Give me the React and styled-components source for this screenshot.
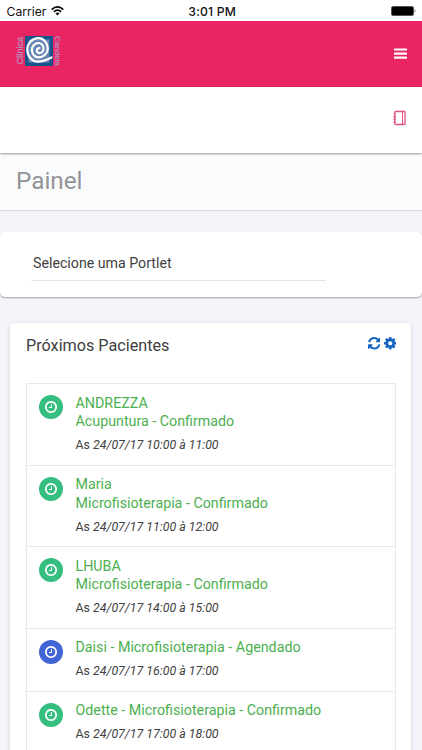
import styled, { createGlobalStyle } from "styled-components";

const GlobalStyle = createGlobalStyle`
    * {
        box-sizing: border-box;
    }

    body {
        margin: 0;
        background: #f4f5fa;
        color: #404040;
        font-family: Roboto, "Liberation Sans", sans-serif;
    }
`;

const patients = [
    { id: 1, lines: ["ANDREZZA", "Acupuntura - Confirmado"], time: "24/07/17 10:00 à 11:00" },
    { id: 2, lines: ["Maria", "Microfisioterapia - Confirmado"], time: "24/07/17 11:00 à 12:00" },
    { id: 3, lines: ["LHUBA", "Microfisioterapia - Confirmado"], time: "24/07/17 14:00 à 15:00" },
    { id: 4, lines: ["Daisi - Microfisioterapia - Agendado"], time: "24/07/17 16:00 à 17:00", color: "#4265d6" },
    { id: 5, lines: ["Odette - Microfisioterapia - Confirmado"], time: "24/07/17 17:00 à 18:00" },
];

const iconPaths = {
    clock: "M1024 544v448q0 14-9 23t-23 9h-320q-14 0-23-9t-9-23v-64q0-14 9-23t23-9h224v-352q0-14 9-23t23-9h64q14 0 23 9t9 23zm416 352q0-148-73-273t-198-198-273-73-273 73-198 198-73 273 73 273 198 198 273 73 273-73 198-198 73-273zm224 0q0 209-103 385.5t-279.5 279.5-385.5 103-385.5-103-279.5-279.5-103-385.5 103-385.5 279.5-279.5 385.5-103 385.5 103 279.5 279.5 103 385.5z",
    refresh: "M1639 1056q0 5-1 7-64 268-268 434.5t-478 166.5q-146 0-282.5-55t-243.5-157l-129 129q-19 19-45 19t-45-19-19-45v-448q0-26 19-45t45-19h448q26 0 45 19t19 45-19 45l-137 137q71 66 161 102t187 36q134 0 250-65t186-179q11-17 53-117 8-23 30-23h192q13 0 22.5 9.5t9.5 22.5zm25-800v448q0 26-19 45t-45 19h-448q-26 0-45-19t-19-45 19-45l138-138q-148-137-349-137-134 0-250 65t-186 179q-11 17-53 117-8 23-30 23h-199q-13 0-22.5-9.5t-9.5-22.5v-7q65-268 270-434.5t480-166.5q146 0 284 55.5t245 156.5l130-129q19-19 45-19t45 19 19 45z",
    cog: "M1152 896q0-106-75-181t-181-75-181 75-75 181 75 181 181 75 181-75 75-181zm512-109v222q0 12-8 23t-20 13l-185 28q-19 54-39 91 35 50 107 138 10 12 10 25t-9 23q-27 37-99 108t-94 71q-12 0-26-9l-138-108q-44 23-91 38-16 136-29 186-7 28-36 28h-222q-14 0-24.5-8.5t-11.5-21.5l-28-184q-49-16-90-37l-141 107q-10 9-25 9-14 0-25-11-126-114-165-168-7-10-7-23 0-12 8-23 15-21 51-66.5t54-70.5q-27-50-41-99l-183-27q-13-2-21-12.5t-8-23.5v-222q0-12 8-23t19-13l186-28q14-46 39-92-40-57-107-138-10-12-10-24 0-10 9-23 26-36 98.5-107.5t94.5-71.5q13 0 26 10l138 107q44-23 91-38 16-136 29-186 7-28 36-28h222q14 0 24.5 8.5t11.5 21.5l28 184q49 16 90 37l142-107q9-9 24-9 13 0 25 10 129 119 165 170 7 8 7 22 0 12-8 23-15 21-51 66.5t-54 70.5q26 50 41 98l183 28q13 2 21 12.5t8 23.5z",
};

const Icon = ({ name, size }) => (
    <svg width={size} height={size} viewBox="128 128 1536 1536" fill="currentColor">
        <path d={iconPaths[name]} />
    </svg>
);

const WifiIcon = () => (
    <svg width="13" height="10" viewBox="0 0 13 10" fill="none" stroke="#000" strokeWidth="1.6">
        <path d="M0.7 3.6Q6.5-1.8 12.3 3.6" />
        <path d="M2.8 5.8Q6.5 2.4 10.2 5.8" />
        <path d="M4.4 7.3Q6.5 5.5 8.6 7.3L6.5 9.5z" fill="#000" stroke="none" />
    </svg>
);

const BatteryIcon = () => (
    <svg width="26" height="10" viewBox="0 0 26 10">
        <rect x="0.5" y="0.5" width="22" height="9" rx="1.5" stroke="#555" fill="#000" />
        <path d="M23.7 3.3q1.4 1.7 0 3.4z" />
    </svg>
);

const BarsIcon = () => (
    <svg width="13" height="12" viewBox="0 0 13 12" fill="#fff">
        <rect y="0.4" width="13" height="2.2" rx="0.5" />
        <rect y="4.5" width="13" height="2.2" rx="0.5" />
        <rect y="8.6" width="13" height="2.2" rx="0.5" />
    </svg>
);

const NotebookIcon = () => (
    <svg width="13" height="16" viewBox="0 0 13 16" fill="none" stroke="#e0527f">
        <rect x="1.8" y="1.5" width="10.2" height="13" rx="0.7" strokeWidth="1.3" />
        <path d="M9.5 1.5v13" />
        <path d="M0.5 4h2.2M0.5 6.7h2.2M0.5 9.4h2.2M0.5 12.1h2.2" strokeWidth="1.2" />
    </svg>
);

const SpiralIcon = () => (
    <svg width="28" height="30" viewBox="0 0 28 30">
        <rect width="28" height="30" fill="#16558b" />
        <rect x="3.5" y="3.5" width="21" height="23" fill="#6786b5" />
        <path
            d="M14.5 12A2.8 2.5 0 0 0 11.8 14.5A2.6 2.5 0 0 0 14.3 17.2A4.2 4.7 0 0 0 18.5 12.5A5 5.5 0 0 0 13.5 7A6.6 7 0 0 0 6.9 14A6.6 7.3 0 0 0 13.5 21.3A9.3 8.5 0 0 0 22.8 12.8A9.3 10.6 0 0 0 13.5 2.2A11.2 11.3 0 0 0 2.3 13.5A10.2 12.1 0 0 0 12.5 25.6Q19 25.6 26.5 21.5"
            fill="none"
            stroke="#fff"
            strokeWidth="2.2"
            strokeLinecap="round"
        />
    </svg>
);

const Screen = styled.div`
    height: 750px;
    overflow: hidden;
`;

const StatusBar = styled.div`
    display: grid;
    grid-template-columns: 1fr auto 1fr;
    align-items: center;
    height: 21px;
    padding: 1px 5px 0 6.5px;
    background: #fff;
    color: #111;
    font: 12.2px Inter, sans-serif;
`;

const Carrier = styled.div`
    display: flex;
    align-items: center;
    gap: 5px;
`;

const Clock = styled.div`
    padding-left: 1px;
    font-weight: 500;
    letter-spacing: 0.2px;
`;

const Battery = styled.div`
    display: flex;
    justify-content: flex-end;
`;

const Header = styled.header`
    display: flex;
    align-items: center;
    justify-content: space-between;
    height: 66px;
    padding: 0 15px 0 16px;
    background: #e92663;
`;

const Logo = styled.div`
    display: flex;
    align-items: center;
    height: 30px;
    margin-top: -6px;
`;

const LogoWord = styled.span`
    width: 9px;
    writing-mode: vertical-rl;
    transform: ${({ $flip }) => ($flip ? "rotate(180deg)" : "none")};
    color: #b58dbd;
    font: ${({ $size }) => $size}px/9px "Liberation Sans", sans-serif;
    -webkit-text-stroke: 0.25px #b58dbd;
    text-align: center;
    white-space: nowrap;
`;

const SubHeader = styled.div`
    position: relative;
    display: flex;
    align-items: center;
    justify-content: flex-end;
    height: 66px;
    padding: 0 16px 4px;
    background: #fff;
    box-shadow: 0 1px 2px rgba(0, 0, 0, 0.4);
`;

const PageTitle = styled.h1`
    height: 58px;
    margin: 0;
    padding: 0 16px;
    border-bottom: 1px solid #d8dae0;
    background: #fafbfd;
    color: #939395;
    font-size: 24.3px;
    font-weight: 400;
    line-height: 56px;
`;

const SelectCard = styled.section`
    height: 65px;
    margin-top: 20.5px;
    padding: 18px 96px 0 31px;
    border-radius: 5px;
    background: #fff;
    box-shadow: 0 1px 2px rgba(0, 0, 0, 0.35);
`;

const SelectField = styled.div`
    height: 31px;
    padding-left: 2px;
    border-bottom: 1px solid #e2e6e6;
    font-size: 14.2px;
    line-height: 27px;
`;

const Portlet = styled.section`
    height: 470px;
    margin: 26.5px 11px 0 10px;
    padding: 0 15px 0 16px;
    border-radius: 4px;
    background: #fff;
    box-shadow: 0 1px 4px rgba(0, 0, 0, 0.15);
`;

const PortletHeader = styled.div`
    display: flex;
    justify-content: space-between;
    height: 60px;
    padding-top: 12px;

    & h2 {
        margin: 0;
        font-size: 16.2px;
        font-weight: 400;
        line-height: 21px;
    }
`;

const Tools = styled.div`
    display: flex;
    gap: 3.5px;
    padding-top: 2px;
    color: #1565c0;
`;

const List = styled.div`
    border: 1px solid #e6e8ea;
    border-bottom: 0;
`;

const Row = styled.div`
    display: flex;
    gap: 12.5px;
    height: ${({ $tall }) => ($tall ? 81.5 : 63)}px;
    padding: 9.5px 12px 0;
    border-bottom: 1px solid #e6e8ea;
`;

const Badge = styled.div`
    display: flex;
    align-items: center;
    justify-content: center;
    width: 24px;
    height: 24px;
    margin-top: 1.5px;
    border-radius: 50%;
    background: ${({ $color }) => $color || "#35be80"};
    color: #fff;
`;

const PatientName = styled.div`
    color: #4caf50;
    font-size: 14.27px;
    line-height: 18.8px;
`;

const Time = styled.div`
    margin-top: 5.2px;
    font-size: 12.35px;
    line-height: 18px;
`;

const PatientRow = ({ lines, time, color }) => (
    <Row $tall={lines.length > 1}>
        <Badge $color={color}>
            <Icon name="clock" size={12} />
        </Badge>
        <div>
            {lines.map((line) => (
                <PatientName key={line}>{line}</PatientName>
            ))}
            <Time>
                As <i>{time}</i>
            </Time>
        </div>
    </Row>
);

const App = () => (
    <Screen>
        <GlobalStyle />
        <StatusBar>
            <Carrier>
                Carrier
                <WifiIcon />
            </Carrier>
            <Clock>3:01 PM</Clock>
            <Battery>
                <BatteryIcon />
            </Battery>
        </StatusBar>
        <Header>
            <Logo>
                <LogoWord $flip $size={9}>Clínica</LogoWord>
                <SpiralIcon />
                <LogoWord $size={8}>Candela</LogoWord>
            </Logo>
            <BarsIcon />
        </Header>
        <SubHeader>
            <NotebookIcon />
        </SubHeader>
        <PageTitle>Painel</PageTitle>
        <SelectCard>
            <SelectField>Selecione uma Portlet</SelectField>
        </SelectCard>
        <Portlet>
            <PortletHeader>
                <h2>Próximos Pacientes</h2>
                <Tools>
                    <Icon name="refresh" size={12.5} />
                    <Icon name="cog" size={12.5} />
                </Tools>
            </PortletHeader>
            <List>
                {patients.map(({ id, lines, time, color }) => (
                    <PatientRow key={id} lines={lines} time={time} color={color} />
                ))}
            </List>
        </Portlet>
    </Screen>
);

export default App;
